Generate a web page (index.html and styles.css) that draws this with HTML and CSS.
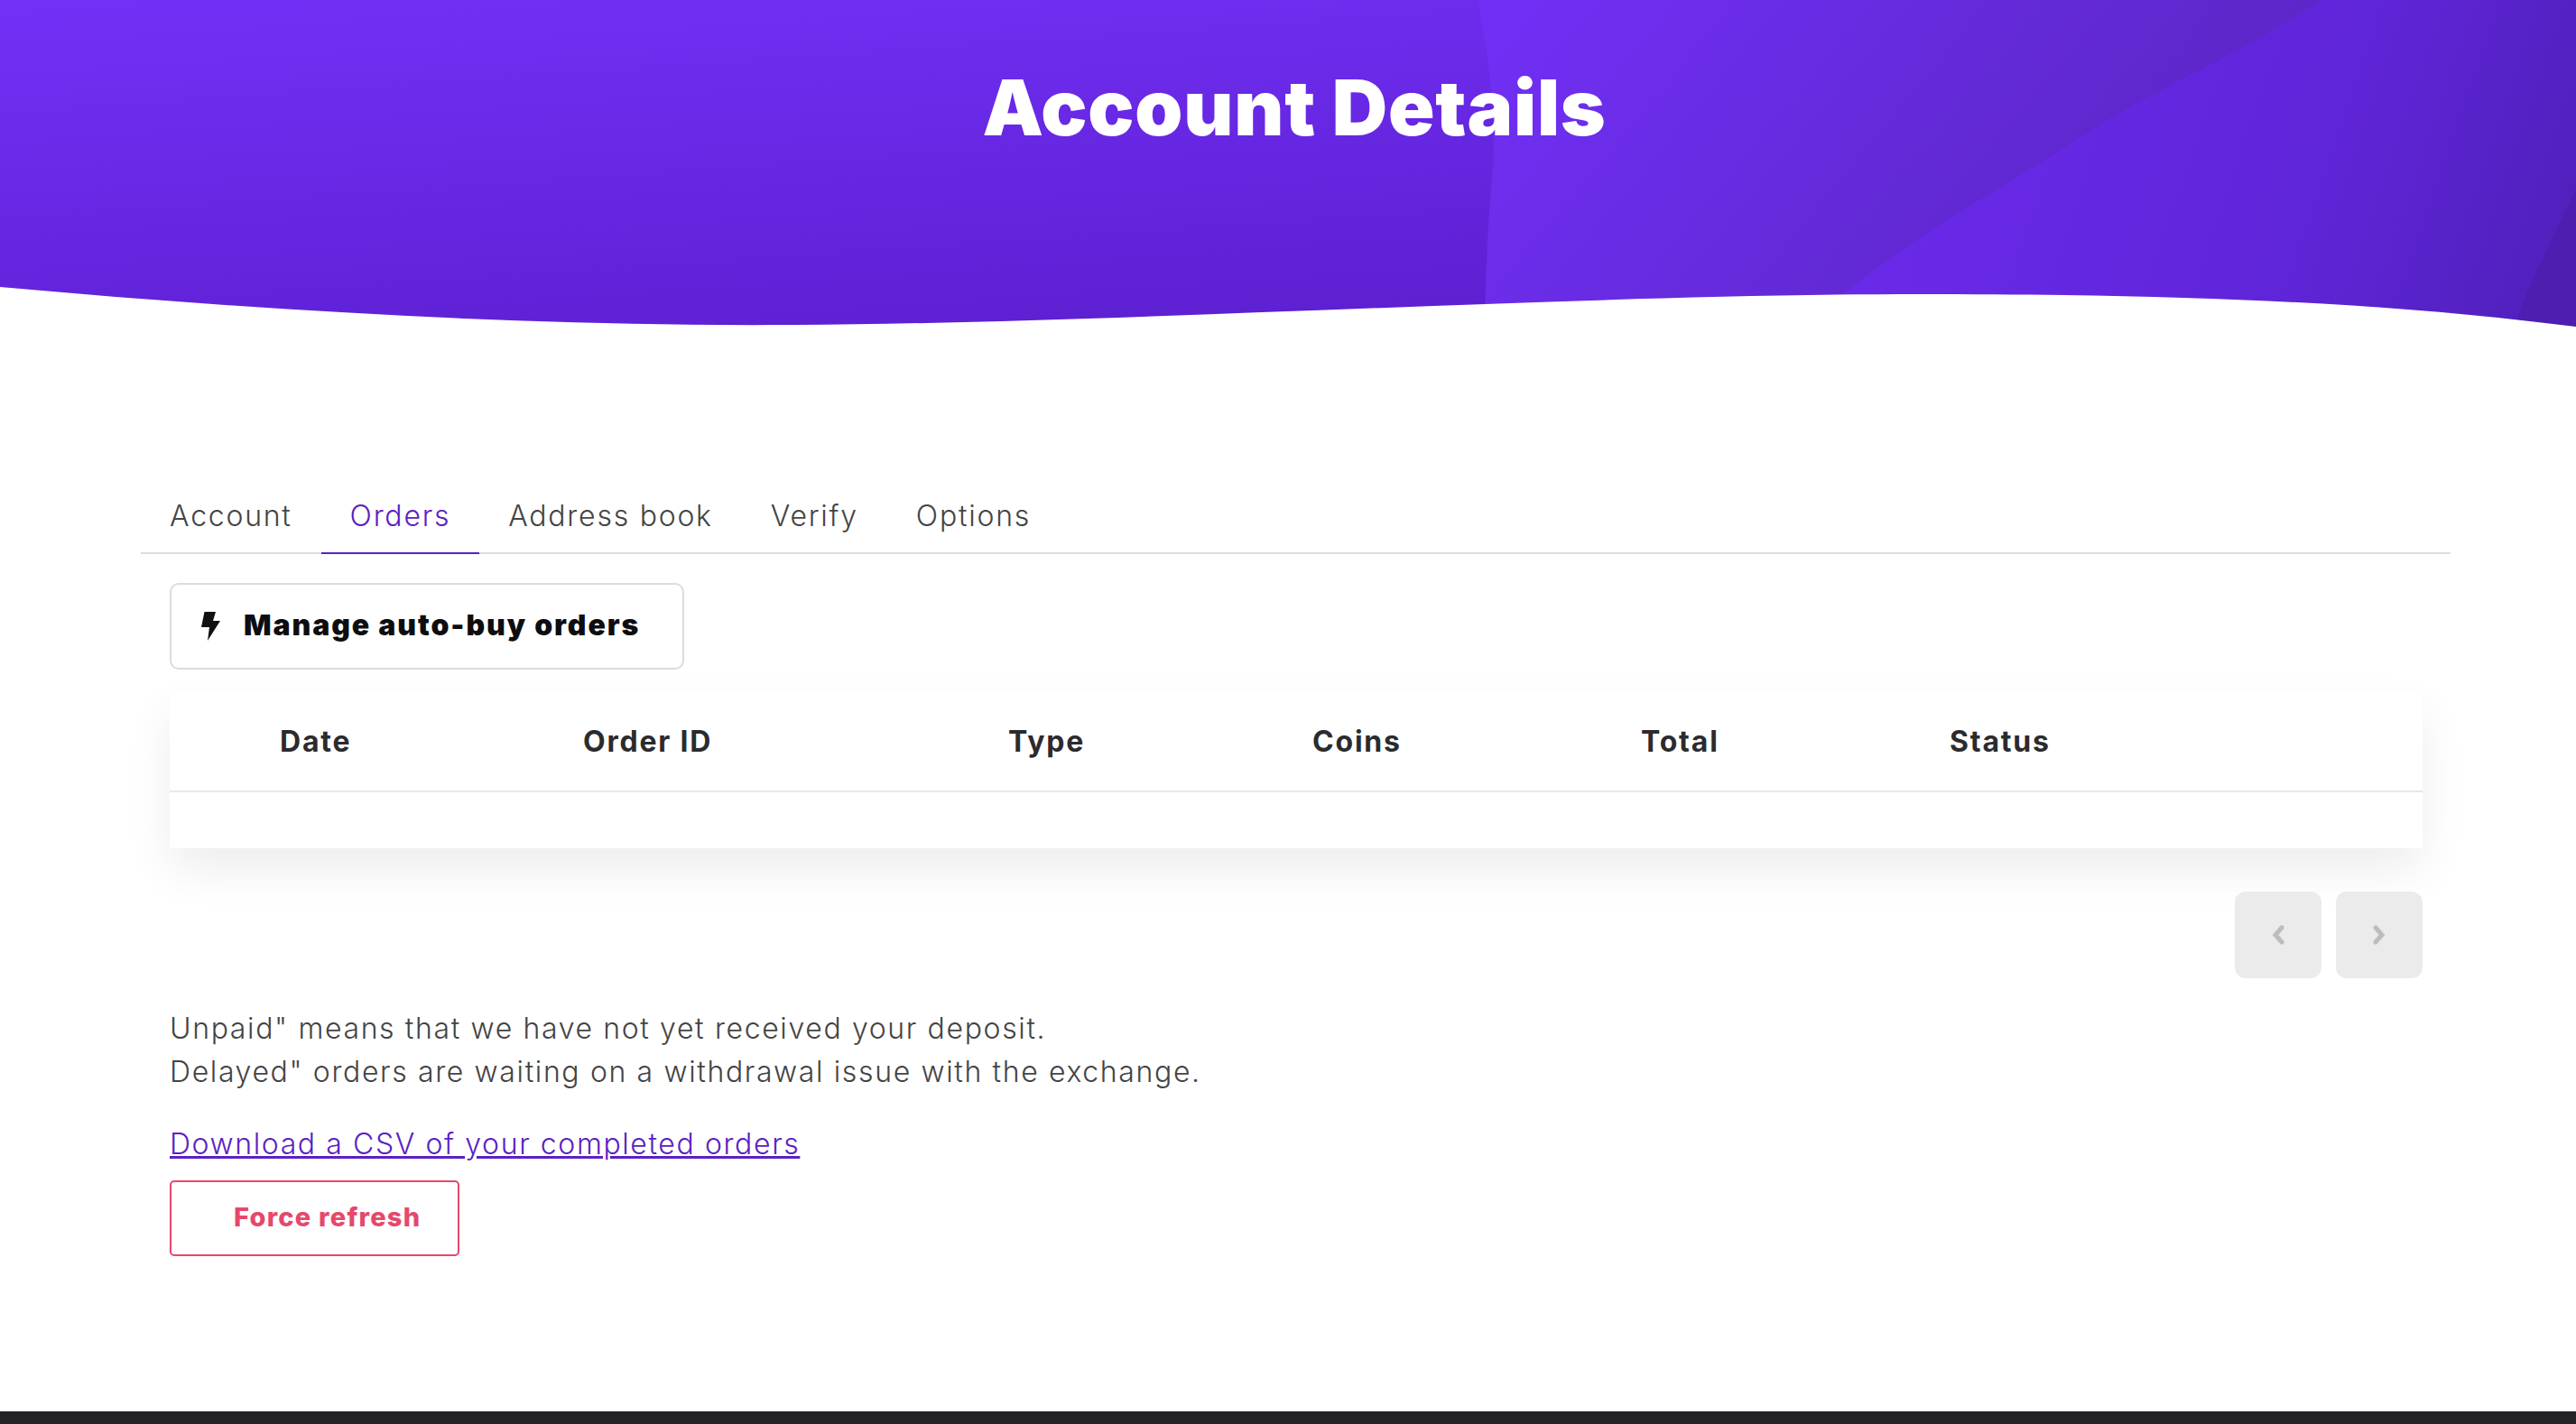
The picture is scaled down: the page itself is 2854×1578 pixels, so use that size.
FILE: index.html
```html
<!DOCTYPE html>
<html lang="en">
<head>
  <meta charset="UTF-8">
  <title>Account Details</title>
  <link rel="stylesheet" href="styles.css">
</head>
<body>
  <header class="hero">
    <svg class="hero-bg" viewBox="0 0 2854 362" preserveAspectRatio="none" aria-hidden="true">
      <defs>
        <linearGradient id="heroBase" gradientUnits="userSpaceOnUse" x1="200" y1="0" x2="230" y2="430">
          <stop offset="0" stop-color="#7230f6"/>
          <stop offset="1" stop-color="#5d20d2"/>
        </linearGradient>
        <linearGradient id="heroMid" gradientUnits="userSpaceOnUse" x1="1700" y1="0" x2="2300" y2="500">
          <stop offset="0" stop-color="#702ff4"/>
          <stop offset="0.95" stop-color="#5a26c4"/>
        </linearGradient>
        <linearGradient id="heroRight" gradientUnits="userSpaceOnUse" x1="2100" y1="100" x2="2854" y2="360">
          <stop offset="0" stop-color="#6a2aea"/>
          <stop offset="0.6" stop-color="#5f25d8"/>
          <stop offset="1" stop-color="#4f1fb8"/>
        </linearGradient>
      </defs>
      <rect width="2854" height="362" fill="url(#heroBase)"/>
      <path d="M1638 0 C1650 70 1660 140 1652 210 C1648 260 1646 300 1645 362 L2854 362 L2854 0 Z" fill="url(#heroMid)"/>
      <path d="M2571 0 C2490 55 2400 95 2340 130 C2210 215 2100 270 2000 362 L2854 362 L2854 0 Z" fill="url(#heroRight)"/>
      <path d="M2854 210 C2830 260 2800 320 2785 362 L2854 362 Z" fill="#4d1eb0"/>
      <path d="M0 318 C300 345 600 362 880 360 C1250 358 1750 326 2127 326 C2420 326 2640 335 2854 362 L2854 362 L0 362 Z" fill="#fff"/>
    </svg>
    <h1 class="hero-title">Account Details</h1>
  </header>

  <main class="content">
    <nav class="tabs">
      <a class="tab">Account</a>
      <a class="tab active">Orders</a>
      <a class="tab">Address book</a>
      <a class="tab">Verify</a>
      <a class="tab">Options</a>
    </nav>

    <div class="panel">
      <button class="btn-auto">
        <svg class="bolt" viewBox="0 0 22 32"><path d="M3.5 0 H16 L13 10 H21 L7 32 L9 17 H0 Z"/></svg>
        Manage auto-buy orders
      </button>

      <div class="orders">
        <div class="orders-head">
          <span>Date</span>
          <span>Order ID</span>
          <span>Type</span>
          <span>Coins</span>
          <span>Total</span>
          <span>Status</span>
        </div>
        <div class="orders-body"></div>
      </div>

      <div class="pager">
        <button class="page-btn">
          <svg viewBox="0 0 14 22"><path d="M11 3 L4 11 L11 19" /></svg>
        </button>
        <button class="page-btn">
          <svg viewBox="0 0 14 22"><path d="M3 3 L10 11 L3 19" /></svg>
        </button>
      </div>

      <p class="note">Unpaid" means that we have not yet received your deposit.<br>Delayed" orders are waiting on a withdrawal issue with the exchange.</p>
      <a class="csv-link" href="#">Download a CSV of your completed orders</a>
      <button class="btn-refresh">Force refresh</button>
    </div>
  </main>

  <footer class="footer"></footer>
</body>
</html>
```

FILE: styles.css
```css
* { box-sizing: border-box; }
html, body { height: 100%; }
body {
  margin: 0;
  background: #fff;
  color: #444;
  font-family: "Inter", "Open Sans", sans-serif;
  display: flex;
  flex-direction: column;
  min-height: 1578px;
  overflow: hidden;
}

/* header */
.hero {
  position: relative;
  height: 362px;
  flex: none;
}
.hero-bg {
  position: absolute;
  top: 0; left: 0;
  width: 100%; height: 100%;
  display: block;
}
.hero-title {
  position: relative;
  margin: 0;
  padding: 72px 0 0 14px;
  text-align: center;
  color: #fff;
  font-size: 85px;
  line-height: 96px;
  font-weight: 900;
  letter-spacing: 0.8px;
}

/* tabs */
.content {
  flex: 1;
  padding: 173px 139px 0 156px;
}
.tabs {
  display: flex;
  height: 79px;
  border-bottom: 2px solid #ddd;
}
.tab {
  height: 79px;
  padding: 16px 32px 0;
  font-size: 32px;
  line-height: 42px;
  font-weight: 300;
  color: #444;
  letter-spacing: 1.75px;
}
.tab.active {
  color: #5a21c4;
  border-bottom: 2px solid #5a21c4;
}

/* panel */
.panel {
  padding: 32px 31px 0 32px;
  display: flex;
  flex-direction: column;
  align-items: flex-start;
}
.btn-auto {
  width: 570px;
  height: 96px;
  padding: 0 0 3px 33px;
  display: flex;
  align-items: center;
  gap: 25px;
  background: #fff;
  border: 2px solid #dcdcdc;
  border-radius: 10px;
  color: #0d0d10;
  font-family: inherit;
  font-size: 32px;
  font-weight: 900;
  letter-spacing: 1.9px;
}
.bolt { width: 22px; height: 32px; fill: #111; flex: none; margin-top: 3px; }

.orders {
  width: 100%;
  margin-top: 24px;
  background: #fff;
  box-shadow: 0 24px 48px rgba(0,0,0,0.07);
}
.orders-head {
  display: grid;
  grid-template-columns: 336px 471px 337px 364px 342px 1fr;
  height: 112px;
  padding-left: 122px;
  align-items: center;
  border-bottom: 2px solid #e8e8e8;
  font-size: 32px;
  font-weight: 700;
  letter-spacing: 1.8px;
  color: #2b2b2e;
}
.orders-body { height: 62px; }

.pager {
  align-self: flex-end;
  display: flex;
  gap: 16px;
  margin-top: 48px;
}
.page-btn {
  width: 96px;
  height: 96px;
  padding: 0;
  border: 0;
  border-radius: 12px;
  background: #ebebeb;
  display: flex;
  align-items: center;
  justify-content: center;
}
.page-btn svg {
  width: 14px;
  height: 22px;
  fill: none;
  stroke: #bdbdbd;
  stroke-width: 5;
  stroke-linecap: round;
  stroke-linejoin: miter;
}

.note {
  margin: 32px 0 0;
  font-size: 32px;
  line-height: 48px;
  font-weight: 300;
  letter-spacing: 1.63px;
  color: #444;
}
.csv-link {
  margin-top: 32px;
  font-size: 32px;
  line-height: 48px;
  font-weight: 300;
  letter-spacing: 1.6px;
  color: #5a21c4;
}
.btn-refresh {
  width: 321px;
  height: 84px;
  margin-top: 16px;
  padding: 0 0 3px 69px;
  text-align: left;
  background: #fff;
  border: 2px solid #e5486c;
  border-radius: 5px;
  color: #e5486c;
  font-family: inherit;
  font-size: 29px;
  font-weight: 800;
  letter-spacing: 1.25px;
}

.footer {
  height: 14px;
  background: #232327;
  flex: none;
  position: absolute;
  top: 1564px;
  left: 0; right: 0;
}
```
